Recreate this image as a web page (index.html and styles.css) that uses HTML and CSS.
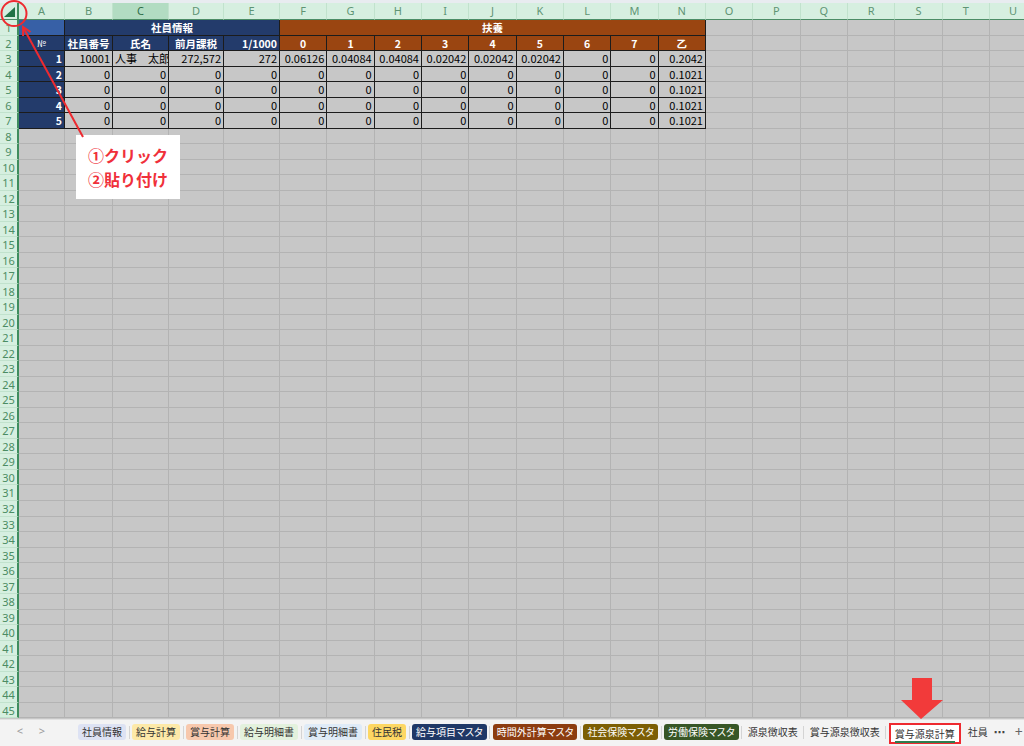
FILE: index.html
```html
<!DOCTYPE html>
<html lang="ja">
<head>
  <meta charset="UTF-8">
  <meta name="viewport" content="width=device-width, initial-scale=1.0">
  <title>賞与源泉計算</title>
  <link rel="stylesheet" href="styles.css">
</head>
<body>
<div class="topstrip"></div>

<div class="grid" id="grid">
  <!-- 列見出し -->
  <div class="corner"><span class="tri"></span></div>
  <div class="ch">A</div>
  <div class="ch">B</div>
  <div class="ch active">C</div>
  <div class="ch">D</div>
  <div class="ch">E</div>
  <div class="ch">F</div>
  <div class="ch">G</div>
  <div class="ch">H</div>
  <div class="ch">I</div>
  <div class="ch">J</div>
  <div class="ch">K</div>
  <div class="ch">L</div>
  <div class="ch">M</div>
  <div class="ch">N</div>
  <div class="ch">O</div>
  <div class="ch">P</div>
  <div class="ch">Q</div>
  <div class="ch">R</div>
  <div class="ch">S</div>
  <div class="ch">T</div>
  <div class="ch">U</div>

  <!-- データ表 A1:N7 -->
  <div class="table">
    <div class="t no1"></div>
    <div class="t navy span4 center">社員情報</div>
    <div class="t brown span9 center">扶養</div>

    <div class="t navy center small">№</div>
    <div class="t navy center">社員番号</div>
    <div class="t navy center">氏名</div>
    <div class="t navy center">前月課税</div>
    <div class="t navy right">1/1000</div>
    <div class="t brown center">0</div>
    <div class="t brown center">1</div>
    <div class="t brown center">2</div>
    <div class="t brown center">3</div>
    <div class="t brown center">4</div>
    <div class="t brown center">5</div>
    <div class="t brown center">6</div>
    <div class="t brown center">7</div>
    <div class="t brown center">乙</div>

    <div class="t navy right">1</div>
    <div class="t d">10001</div>
    <div class="t d left">人事　太郎</div>
    <div class="t d">272,572</div>
    <div class="t d">272</div>
    <div class="t d">0.06126</div>
    <div class="t d">0.04084</div>
    <div class="t d">0.04084</div>
    <div class="t d">0.02042</div>
    <div class="t d">0.02042</div>
    <div class="t d">0.02042</div>
    <div class="t d">0</div>
    <div class="t d">0</div>
    <div class="t d">0.2042</div>

    <div class="t navy right">2</div>
    <div class="t d">0</div><div class="t d">0</div><div class="t d">0</div><div class="t d">0</div>
    <div class="t d">0</div><div class="t d">0</div><div class="t d">0</div><div class="t d">0</div>
    <div class="t d">0</div><div class="t d">0</div><div class="t d">0</div><div class="t d">0</div>
    <div class="t d">0.1021</div>

    <div class="t navy right">3</div>
    <div class="t d">0</div><div class="t d">0</div><div class="t d">0</div><div class="t d">0</div>
    <div class="t d">0</div><div class="t d">0</div><div class="t d">0</div><div class="t d">0</div>
    <div class="t d">0</div><div class="t d">0</div><div class="t d">0</div><div class="t d">0</div>
    <div class="t d">0.1021</div>

    <div class="t navy right">4</div>
    <div class="t d">0</div><div class="t d">0</div><div class="t d">0</div><div class="t d">0</div>
    <div class="t d">0</div><div class="t d">0</div><div class="t d">0</div><div class="t d">0</div>
    <div class="t d">0</div><div class="t d">0</div><div class="t d">0</div><div class="t d">0</div>
    <div class="t d">0.1021</div>

    <div class="t navy right">5</div>
    <div class="t d">0</div><div class="t d">0</div><div class="t d">0</div><div class="t d">0</div>
    <div class="t d">0</div><div class="t d">0</div><div class="t d">0</div><div class="t d">0</div>
    <div class="t d">0</div><div class="t d">0</div><div class="t d">0</div><div class="t d">0</div>
    <div class="t d">0.1021</div>
  </div>
</div>

<!-- シートタブ -->
<div class="tabbar">
  <span class="nav">&lt;</span>
  <span class="nav">&gt;</span>
  <div class="tabs">
    <span class="tab lavender">社員情報</span><span class="sep"></span>
    <span class="tab cream">給与計算</span><span class="sep"></span>
    <span class="tab peach">賞与計算</span><span class="sep"></span>
    <span class="tab mint">給与明細書</span><span class="sep"></span>
    <span class="tab sky">賞与明細書</span><span class="sep"></span>
    <span class="tab gold">住民税</span><span class="sep"></span>
    <span class="tab dnavy">給与項目マスタ</span><span class="sep"></span>
    <span class="tab dbrown">時間外計算マスタ</span><span class="sep"></span>
    <span class="tab olive">社会保険マスタ</span><span class="sep"></span>
    <span class="tab forest">労働保険マスタ</span><span class="sep"></span>
    <span class="tab plain">源泉徴収表</span><span class="sep"></span>
    <span class="tab plain">賞与源泉徴収表</span><span class="sep"></span>
    <span class="tab current"><span class="ul">賞与源泉計算</span></span>
    <span class="tab plain last">社員</span>
    <span class="more">⋯</span>
    <span class="plus">+</span>
  </div>
</div>

<!-- 注釈 -->
<div class="callout">
  <p>①クリック</p>
  <p>②貼り付け</p>
</div>
<svg class="marks" width="1024" height="746" viewBox="0 0 1024 746">
  <circle cx="14" cy="13.5" r="12.5" fill="none" stroke="#ee2a30" stroke-width="2"/>
  <line x1="83" y1="137" x2="23" y2="27" stroke="#ee2a30" stroke-width="2"/>
  <polyline points="23.1,36 23,27 30.5,32" fill="none" stroke="#ee2a30" stroke-width="2"/>
  <polygon points="912,678 932,678 932,700 943,700 921,719 901,700 912,700" fill="#f23a3a"/>
</svg>

<script>
  // 行見出しと空セルを作る
  const grid = document.getElementById('grid');
  for (let r = 1; r <= 45; r++) {
    const head = document.createElement('div');
    head.className = 'rh';
    head.textContent = r;
    grid.appendChild(head);

    const count = r <= 7 ? 7 : 21; // 1〜7行目は A:N が表
    for (let i = 0; i < count; i++) {
      const cell = document.createElement('div');
      cell.className = 'cell';
      grid.appendChild(cell);
    }
  }
</script>
</body>
</html>
```

FILE: styles.css
```css
body {
  margin: 0;
  width: 1024px;
  height: 746px;
  overflow: hidden;
  font-family: "Noto Sans CJK JP", "Noto Sans", sans-serif;
  background-color: #f3f3f3;
  color: #000;
  position: relative;
}
.topstrip {
  height: 3px;
  background-color: #e8ecf0;
}
.grid {
  display: grid;
  grid-template-columns: 19px 46px 48px 56px 55px 56px repeat(16, 47.33px);
  grid-template-rows: 17px repeat(45, 15.53px);
  height: 716px;
  overflow: hidden;
  background-color: #c7c7c7;
}
.corner {
  background-color: #d6efe0;
  border-right: 2px solid #3f8d5e;
  border-bottom: 1px solid #4c8d66;
  box-sizing: border-box;
  position: relative;
}
.tri {
  position: absolute;
  right: 2px;
  bottom: 2px;
  width: 0;
  height: 0;
  border-left: 11px solid transparent;
  border-bottom: 10px solid #217346;
}
.ch {
  background-color: #d6efe0;
  border-right: 1px solid #c1e2cd;
  border-bottom: 1px solid #4c8d66;
  box-sizing: border-box;
  font-family: "Noto Sans", sans-serif;
  font-size: 11px;
  line-height: 16px;
  text-align: center;
  color: #5f9474;
}
.ch.active {
  background-color: #b2dcc2;
  color: #2f6e48;
}
.rh {
  background-color: #d6efe0;
  border-right: 2px solid #3f8d5e;
  border-bottom: 1px solid #c1e2cd;
  box-sizing: border-box;
  font-family: "Noto Sans", sans-serif;
  font-size: 11px;
  line-height: 15px;
  text-align: center;
  color: #4b8c63;
}
.cell {
  border-right: 1px solid #b3b3b3;
  border-bottom: 1px solid #b3b3b3;
  box-sizing: border-box;
}

/* データ表 */
.table {
  grid-column: 2 / 16;
  grid-row: 2 / 9;
  display: grid;
  grid-template-columns: 46px 48px 56px 55px 56px repeat(9, 47.33px);
  grid-template-rows: repeat(7, 15.53px);
}
.t {
  border-right: 1px solid #1c1c1c;
  border-bottom: 1px solid #1c1c1c;
  box-sizing: border-box;
  font-size: 11px;
  line-height: 15px;
  padding: 0 2px;
  text-align: right;
  white-space: nowrap;
  overflow: hidden;
}
.t.d {
  background-color: #c7c7c7;
}
.t.left {
  text-align: left;
}
.t.center {
  text-align: center;
}
.t.right {
  text-align: right;
}
.navy {
  background-color: #233b6b;
  color: #fff;
  font-weight: bold;
  font-size: 10.5px;
}
.brown {
  background-color: #9a4511;
  color: #fff;
  font-weight: bold;
  font-size: 10.5px;
}
.no1 {
  background-color: #3760a6;
}
.small {
  font-size: 9px;
  font-weight: normal;
}
.span4 {
  grid-column: span 4;
}
.span9 {
  grid-column: span 9;
}

/* シートタブ */
.tabbar {
  height: 27px;
  display: flex;
  align-items: flex-start;
  padding-top: 3px;
  box-sizing: border-box;
  background-color: #f3f3f3;
  border-top: 1px solid #e2e2e2;
}
.tabbar > *,
.tabs > * {
  flex-shrink: 0;
}
.nav {
  width: 22px;
  text-align: center;
  color: #9a9a9a;
  font-family: "Noto Sans", sans-serif;
  font-size: 11px;
  line-height: 16px;
  margin-left: 9px;
}
.nav + .nav {
  margin-left: 0;
}
.tabs {
  display: flex;
  align-items: center;
  margin-left: 25px;
  height: 18px;
}
.tab {
  height: 16px;
  line-height: 16px;
  padding: 0 4px;
  font-size: 10px;
  font-feature-settings: "palt";
  border-radius: 3px;
  color: #333;
  white-space: nowrap;
}
.sep {
  width: 1px;
  height: 13px;
  margin: 0 2.5px;
  background-color: #d4d4d4;
}
.lavender { background-color: #dde2f3; }
.cream { background-color: #fde9a8; }
.peach { background-color: #f7c8ad; }
.mint { background-color: #e3f1dd; }
.sky { background-color: #dfebf7; }
.gold { background-color: #fdd763; }
.dnavy { background-color: #1f3866; color: #fff; }
.dbrown { background-color: #8c3c10; color: #fff; }
.olive { background-color: #7c5e04; color: #fff; }
.forest { background-color: #375626; color: #fff; }
.plain {
  background: none;
  padding: 0 3px;
}
.last {
  margin-left: 4px;
}
.current {
  height: 21px;
  line-height: 18px;
  border: 2px solid #ee2a30;
  border-radius: 0;
  background-color: #fff;
  box-sizing: border-box;
  padding: 0 4px;
  margin-top: 2px;
}
.current .ul {
  display: inline-block;
  line-height: 14px;
  border-bottom: 2px solid #2e7d4f;
}
.more {
  font-family: "DejaVu Sans", sans-serif;
  font-size: 11px;
  font-weight: bold;
  color: #444;
  margin-left: 3px;
}
.plus {
  font-family: "Noto Sans", sans-serif;
  font-size: 14px;
  line-height: 16px;
  color: #666;
  margin-left: 10px;
}

/* 注釈 */
.callout {
  position: absolute;
  left: 76px;
  top: 135px;
  width: 104px;
  height: 64px;
  background-color: #fff;
  color: #f0303a;
  font-weight: bold;
  font-size: 16px;
  text-align: center;
  box-sizing: border-box;
  padding-top: 8px;
}
.callout p {
  margin: 0;
  line-height: 24px;
}
.marks {
  position: absolute;
  left: 0;
  top: 0;
  pointer-events: none;
}
```
